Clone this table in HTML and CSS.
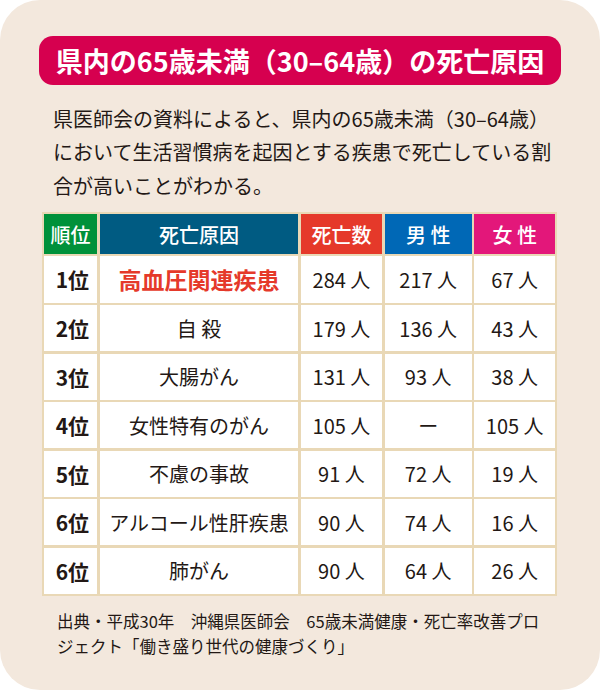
FILE: index.html
```html
<!DOCTYPE html>
<html lang="ja">
<head>
<meta charset="utf-8">
<link rel="stylesheet" href="styles.css">
</head>
<body>
<div class="panel">
  <h1 class="title">県内の65歳未満（30–64歳）の死亡原因</h1>
  <p class="lead">県医師会の資料によると、県内の65歳未満（30–64歳）<br>において生活習慣病を起因とする疾患で死亡している割<br>合が高いことがわかる。</p>
  <div class="table">
    <div class="th th-rank">順位</div>
    <div class="th th-cause">死亡原因</div>
    <div class="th th-total">死亡数</div>
    <div class="th th-male">男 性</div>
    <div class="th th-female">女 性</div>

    <div class="td rank">1位</div><div class="td cause top">高血圧関連疾患</div><div class="td">284 人</div><div class="td">217 人</div><div class="td">67 人</div>
    <div class="td rank">2位</div><div class="td cause">自 殺</div><div class="td">179 人</div><div class="td">136 人</div><div class="td">43 人</div>
    <div class="td rank">3位</div><div class="td cause">大腸がん</div><div class="td">131 人</div><div class="td">93 人</div><div class="td">38 人</div>
    <div class="td rank">4位</div><div class="td cause">女性特有のがん</div><div class="td">105 人</div><div class="td">ー</div><div class="td">105 人</div>
    <div class="td rank">5位</div><div class="td cause">不慮の事故</div><div class="td">91 人</div><div class="td">72 人</div><div class="td">19 人</div>
    <div class="td rank">6位</div><div class="td cause">アルコール性肝疾患</div><div class="td">90 人</div><div class="td">74 人</div><div class="td">16 人</div>
    <div class="td rank">6位</div><div class="td cause">肺がん</div><div class="td">90 人</div><div class="td">64 人</div><div class="td">26 人</div>
  </div>
  <p class="note">出典・平成30年　沖縄県医師会　65歳未満健康・死亡率改善プロ<br>ジェクト「働き盛り世代の健康づくり」</p>
</div>
</body>
</html>
```
FILE: styles.css
```css
html, body {
  margin: 0;
  padding: 0;
  background: #ffffff;
}
body {
  font-family: "Noto Sans CJK JP", "Noto Sans", sans-serif;
  color: #231815;
}
.panel {
  width: 600px;
  height: 690px;
  box-sizing: border-box;
  background: #f3e8dd;
  border-radius: 40px;
  padding-top: 36px;
  display: flex;
  flex-direction: column;
  align-items: flex-start;
}
.title {
  margin: 0 0 0 39px;
  width: 522px;
  height: 49px;
  border-radius: 14px;
  background: #d6004f;
  color: #ffffff;
  font-size: 27px;
  font-weight: 700;
  line-height: 49px;
  text-align: center;
  white-space: nowrap;
}
.lead {
  margin: 16.5px 0 0 53px;
  font-size: 20px;
  line-height: 33.5px;
  white-space: nowrap;
}
.table {
  margin: 10px 0 0 41.7px;
  display: grid;
  grid-template-columns: 53.5px 198.5px 81.5px 87px 81px;
  grid-template-rows: 40px repeat(7, 46.2px);
  gap: 2.4px 2.5px;
  padding: 2px;
  background: #e9d8b6;
}
.th, .td {
  display: flex;
  align-items: center;
  justify-content: center;
  white-space: nowrap;
}
.th {
  color: #ffffff;
  font-size: 20px;
  font-weight: 500;
}
.th-rank { background: #00913a; }
.th-cause { background: #005b82; }
.th-total { background: #e5392a; }
.th-male { background: #0068b6; }
.th-female { background: #e3177a; }
.td {
  background: #ffffff;
  font-size: 20px;
}
.rank {
  font-weight: 700;
  font-size: 21px;
  padding-left: 4px;
}
.top {
  color: #e5392a;
  font-weight: 700;
  font-size: 23px;
}
.note {
  margin: 12.5px 0 0 57px;
  font-size: 16.5px;
  line-height: 25px;
  white-space: nowrap;
}
```
